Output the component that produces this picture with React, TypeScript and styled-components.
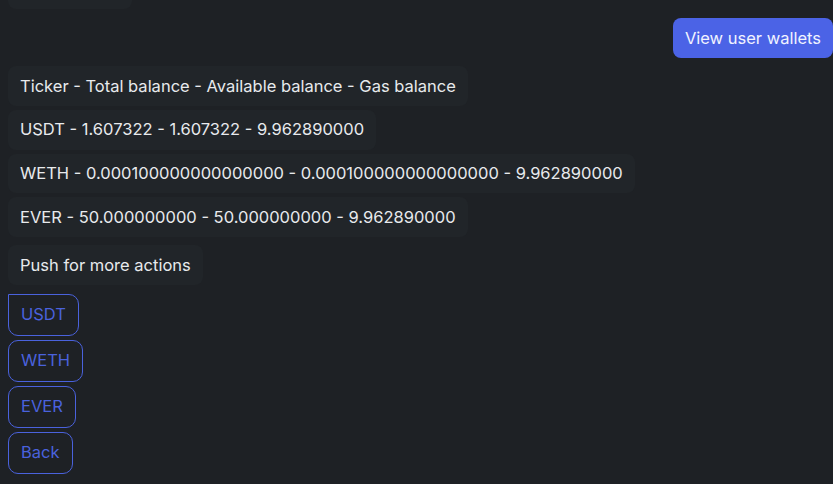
import React from "react";
import styled, { createGlobalStyle } from "styled-components";

const Global = createGlobalStyle`
  html, body { margin: 0; padding: 0; background: #1e2125; }
  body { font-family: Inter, "Noto Sans", sans-serif; overflow: hidden; }
`;

const Chat = styled.div`
  display: flex;
  flex-direction: column;
  align-items: flex-start;
  padding: 0 0 0 8px;
  height: 484px;
  overflow: hidden;
`;

const CutBubble = styled.div`
  width: 124px;
  height: 9px;
  background: #212529;
  border-radius: 0 0 8px 8px;
`;

const Bubble = styled.div<{ $mt?: number }>`
  background: #212529;
  color: #e8eaed;
  font-size: 16.5px;
  line-height: 24.75px;
  padding: 7.5px 12px;
  border-radius: 8px;
  margin-top: ${(p) => p.$mt ?? 4}px;
  white-space: nowrap;
`;

const UserButton = styled.button`
  align-self: flex-end;
  margin-top: 9px;
  margin-bottom: 8.25px;
  background: #4b63e6;
  color: #f1f3ff;
  border: none;
  border-radius: 8px;
  font-family: inherit;
  font-size: 16.5px;
  line-height: 24.75px;
  padding: 7.5px 12px;
  cursor: pointer;
`;

const ActionButton = styled.button<{ $mt?: number; $first?: boolean }>`
  margin-top: ${(p) => p.$mt ?? 4.25}px;
  background: transparent;
  color: #4a62dd;
  border: 1px solid #4a62dd;
  border-radius: ${(p) => (p.$first ? "0 10px 10px 10px" : "10px")};
  font-family: inherit;
  font-size: 16.5px;
  line-height: 24.75px;
  padding: 7.5px 12px;
  cursor: pointer;
`;

export default function App() {
  return (
    <>
      <Global />
      <Chat>
        <CutBubble />
        <UserButton>View user wallets</UserButton>
        <Bubble $mt={0}>Ticker - Total balance - Available balance - Gas balance</Bubble>
        <Bubble>USDT - 1.607322 - 1.607322 - 9.962890000</Bubble>
        <Bubble>WETH - 0.000100000000000000 - 0.000100000000000000 - 9.962890000</Bubble>
        <Bubble>EVER - 50.000000000 - 50.000000000 - 9.962890000</Bubble>
        <Bubble $mt={8}>Push for more actions</Bubble>
        <ActionButton $mt={9} $first>USDT</ActionButton>
        <ActionButton>WETH</ActionButton>
        <ActionButton>EVER</ActionButton>
        <ActionButton>Back</ActionButton>
      </Chat>
    </>
  );
}
